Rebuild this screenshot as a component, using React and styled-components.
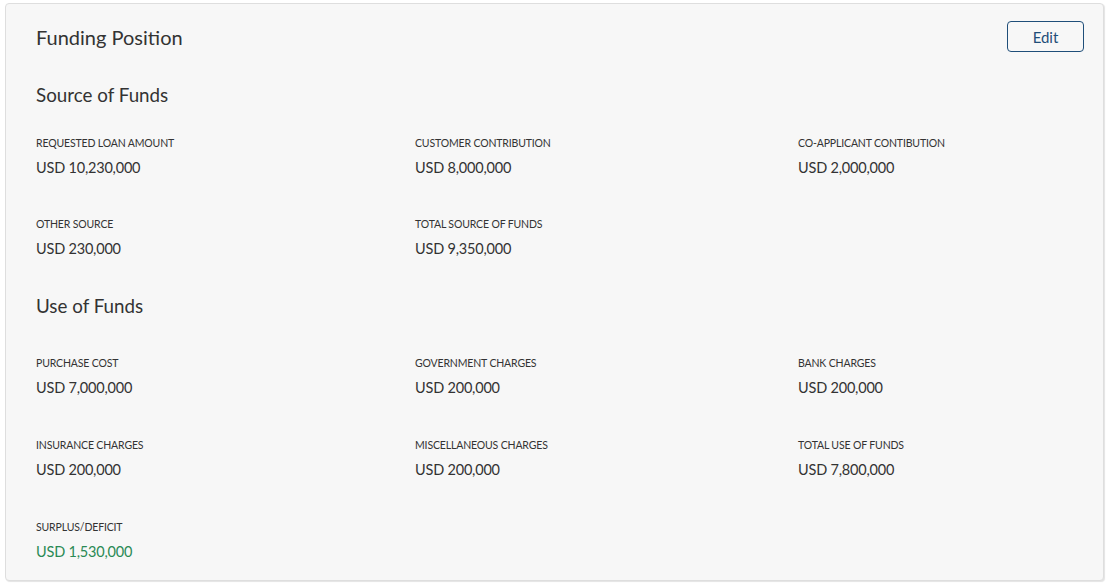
import React from 'react';
import styled, { createGlobalStyle } from 'styled-components';

const GlobalStyle = createGlobalStyle`
  body {
    margin: 0;
    background: #ffffff;
    font-family: Lato, "Liberation Sans", sans-serif;
    color: #333333;
  }
`;

const Page = styled.div`
  padding: 3px 2px 5px 5px;
`;

const Card = styled.section`
  background-color: #f7f7f7;
  border: 1px solid #dedede;
  border-radius: 4px;
  box-shadow: 1px 1px 1px #e4e4e4;
  padding: 17px 19px 18px 30px;
`;

const Header = styled.div`
  display: flex;
  justify-content: space-between;
  align-items: center;
  height: 31px;
`;

const Title = styled.h2`
  margin: 0;
  font-size: 20px;
  font-weight: 400;
  color: #333333;
`;

const EditButton = styled.button`
  width: 77px;
  height: 31px;
  border: 1px solid #1f4e79;
  border-radius: 4px;
  background: transparent;
  color: #1f4e79;
  font-family: inherit;
  font-size: 15px;
  cursor: pointer;
`;

const SectionTitle = styled.h3`
  margin: ${p => p.$top}px 0 ${p => p.$bottom}px;
  font-size: 18.8px;
  line-height: 24px;
  font-weight: 400;
  color: #333333;
`;

const Grid = styled.div`
  display: grid;
  grid-template-columns: 379px 383px 1fr;
  row-gap: ${p => p.$gap}px;
`;

const Field = styled.div`
  display: flex;
  flex-direction: column;
  gap: 7px;
`;

const Label = styled.span`
  font-size: 10.5px;
  line-height: 16px;
  letter-spacing: -0.15px;
  text-transform: uppercase;
  color: #333333;
`;

const Value = styled.span`
  font-size: 14.5px;
  line-height: 20px;
  letter-spacing: -0.2px;
  color: ${p => (p.$positive ? '#2a8a55' : '#333333')};
`;

const sourceFields = [
  ['Requested Loan Amount', 'USD 10,230,000'],
  ['Customer Contribution', 'USD 8,000,000'],
  ['Co-Applicant Contibution', 'USD 2,000,000'],
  ['Other Source', 'USD 230,000'],
  ['Total Source of Funds', 'USD 9,350,000'],
];

const useFields = [
  ['Purchase Cost', 'USD 7,000,000'],
  ['Government Charges', 'USD 200,000'],
  ['Bank Charges', 'USD 200,000'],
  ['Insurance Charges', 'USD 200,000'],
  ['Miscellaneous Charges', 'USD 200,000'],
  ['Total Use of Funds', 'USD 7,800,000'],
  ['Surplus/Deficit', 'USD 1,530,000', true],
];

const FieldGrid = ({ fields, gap }) => (
  <Grid $gap={gap}>
    {fields.map(([label, value, positive]) => (
      <Field key={label}>
        <Label>{label}</Label>
        <Value $positive={positive}>{value}</Value>
      </Field>
    ))}
  </Grid>
);

export default function App() {
  return (
    <Page>
      <GlobalStyle />
      <Card>
        <Header>
          <Title>Funding Position</Title>
          <EditButton>Edit</EditButton>
        </Header>

        <SectionTitle $top={31} $bottom={28}>Source of Funds</SectionTitle>
        <FieldGrid fields={sourceFields} gap={38} />

        <SectionTitle $top={35} $bottom={37}>Use of Funds</SectionTitle>
        <FieldGrid fields={useFields} gap={39} />
      </Card>
    </Page>
  );
}
